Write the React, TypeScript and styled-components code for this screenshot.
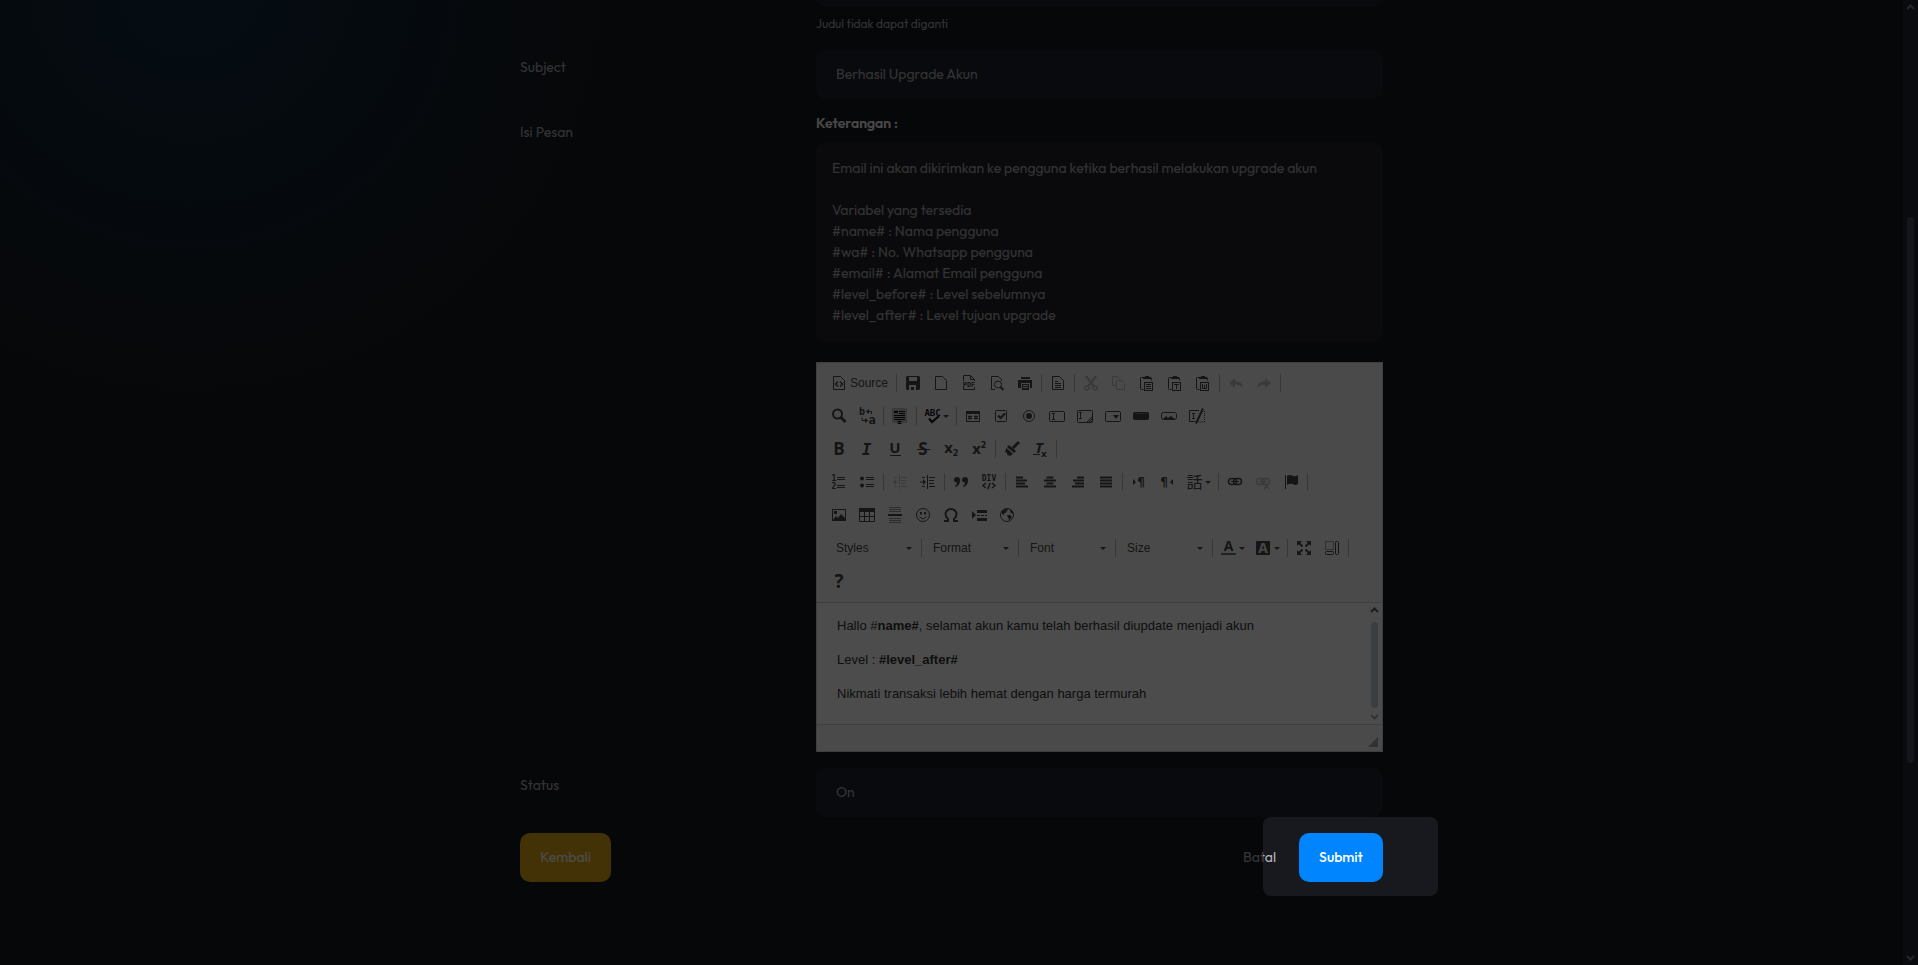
import React from "react";
import styled, { createGlobalStyle, css } from "styled-components";

const ui = `Outfit, Lato, "Liberation Sans", sans-serif`;
const arial = `"Liberation Sans", Arial, sans-serif`;

const Global = createGlobalStyle`
  *, *::before, *::after { box-sizing: border-box; }
  html, body { margin: 0; background: #060709; }
  body { font-family: ${ui}; font-size: 14px; line-height: 21px; color: #a9abb0; overflow: hidden; }
  button, input, select { font: inherit; color: inherit; margin: 0; }
`;

/* ---------- page frame ---------- */

const Frame = styled.div`
  display: grid;
  grid-template-columns: minmax(0, 1fr) 15px;
  height: 100vh;
`;

const Page = styled.main`
  overflow: hidden;
  background: radial-gradient(circle at 190px -20px, #112d43 0, #112534 150px, #141f2b 280px, #17191e 460px) #17191e;
`;

const Form = styled.form`
  max-width: 887px;
  margin: -42px auto 0;
  padding: 0 12px;
  display: flex;
  flex-direction: column;
  gap: 16px;
`;

const FormRow = styled.div`
  display: grid;
  grid-template-columns: 272px minmax(0, 1fr);
  column-gap: 24px;
  align-items: start;
`;

const Label = styled.label`
  padding-top: 7px;
`;

const control = css`
  display: block;
  width: 100%;
  height: 49px;
  padding: 0 20px 2px;
  border: 0;
  border-radius: 10px;
  background: #1f222e;
  outline: none;
`;

const TextInput = styled.input`${control}`;
const SelectInput = styled.select`${control} padding-bottom: 0; appearance: none;`;

const Help = styled.small`
  display: block;
  margin-top: 7px;
  height: 20px;
  font-size: 12px;
  line-height: 20px;
`;

const Caption = styled.strong`
  display: block;
  height: 27px;
  line-height: 17px;
  font-weight: 600;
  color: #f2f2f2;
`;

const Note = styled.div`
  padding: 16px;
  margin-bottom: 20px;
  border-radius: 10px;
  background: #242429;
  white-space: pre-line;
`;

const Actions = styled.div`
  display: flex;
  align-items: center;
`;

const Button = styled.button<{ $tone?: "warning" | "primary" }>`
  height: 49px;
  padding: 0 20px;
  border: 0;
  border-radius: 10px;
  font-weight: ${p => (p.$tone === "primary" ? 500 : 400)};
  color: ${p => (p.$tone ? "#fff" : "#b4b6bb")};
  background: ${p => (p.$tone === "warning" ? "#dea716" : p.$tone === "primary" ? "#0085ff" : "transparent")};
`;

const BackButton = styled(Button)`
  width: 91px;
  margin-right: auto;
`;

const TourTarget = styled.div`
  position: relative;
  z-index: 2;
  margin-left: 3px;
  ${Button} { width: 84px; }
`;

const Spotlight = styled.div`
  position: absolute;
  inset: -16px -55px -14px -36px;
  border-radius: 8px;
  box-shadow: 0 0 0 4000px rgba(0, 0, 0, 0.7);
  pointer-events: none;
`;

const Track = styled.div<{ $small?: boolean }>`
  display: flex;
  flex-direction: column;
  align-items: center;
  justify-content: space-between;
  width: 15px;
  padding: 4px 0;
  background: ${p => (p.$small ? "transparent" : "#0a0b0f")};
  color: ${p => (p.$small ? "#5c5c5c" : "#26272b")};
  svg:last-child { color: ${p => (p.$small ? "#a6a6a6" : "#26272b")}; }
`;

const Thumb = styled.div<{ $small?: boolean }>`
  width: 7px;
  flex: 0 0 ${p => (p.$small ? "86px" : "57%")};
  margin-top: ${p => (p.$small ? "3px" : "15px")};
  border-radius: 3px;
  background: ${p => (p.$small ? "#c6d0da" : "#15151c")};
`;

const Chevron = ({ down }: { down?: boolean }) => (
  <svg width="9" height="6" viewBox="0 0 9 6" aria-hidden="true">
    <path d={down ? "M1 1l3.500 3.500L8 1" : "M1 5l3.500-3.500L8 5"} fill="none" stroke="currentColor" strokeWidth="2" />
  </svg>
);

/* ---------- editor ---------- */

const Editor = styled.div`
  border: 1px solid #d1d1d1;
  background: #fff;
  color: #333;
  font-family: ${arial};
`;

const Toolbar = styled.div`
  padding: 6px 8px 2px;
  border-bottom: 1px solid #d1d1d1;
  background: #f8f8f8;
  color: #484848;
  font-size: 12px;
`;

const ToolRow = styled.div`
  display: flex;
  height: 28px;
  margin-bottom: 5px;
`;

const Divider = styled.span<{ $tight?: boolean }>`
  width: 1px;
  height: 18px;
  margin: ${p => (p.$tight ? "5px 0" : "5px 2px")};
  background: #bcbcbc;
`;

const LastDivider = styled(Divider)`
  margin: 5px 2px 5px 0;
`;

const ToolButton = styled.button<{ $labelled?: boolean }>`
  display: flex;
  align-items: center;
  gap: 3px;
  width: ${p => (p.$labelled ? "69px" : "auto")};
  height: 28px;
  padding: 0 6px;
  border: 0;
  background: none;
  line-height: 16px;
  &:disabled { color: inherit; opacity: 0.3; }
`;

const Glyph = styled.svg`
  display: block;
  flex: none;
  overflow: visible;
  text { font-family: "Open Sans", ${arial}; font-weight: 700; fill: currentColor; text-anchor: middle; }
  text.mono { font-family: "DejaVu Sans Mono", monospace; }
  text.wide { font-family: "DejaVu Sans", sans-serif; }
  text.cjk { font-family: "Noto Sans CJK JP", sans-serif; font-weight: 400; }
`;

const Caret = styled.span`
  margin-top: 1px;
  border: 3px solid transparent;
  border-top-color: #484848;
  border-bottom-width: 0;
`;

const Arrowed = styled(ToolButton)`
  width: 35px;
  gap: 2px;
  padding-right: 5px;
`;

const Combo = styled.label`
  display: flex;
  align-items: center;
  width: 96px;
  padding: 0 9px 0 11px;
  select {
    flex: 1;
    min-width: 0;
    padding: 0;
    border: 0;
    background: none;
    appearance: none;
    outline: none;
  }
`;

const Contents = styled.div`
  display: flex;
  height: 121px;
`;

const Editable = styled.div`
  flex: 1;
  padding: 0 20px;
  overflow: hidden;
  outline: none;
  font-size: 13px;
  p { margin: 13px 0; }
  p:first-child { margin-top: 12px; }
`;

const Footer = styled.div`
  display: flex;
  justify-content: flex-end;
  align-items: flex-end;
  height: 27px;
  padding: 4px;
  border-top: 1px solid #d1d1d1;
  background: #f8f8f8;
  svg { display: block; }
`;

const S = (d: string, w = 1) => <path d={d} fill="none" stroke="currentColor" strokeWidth={w} />;
const F = (d: string) => <path d={d} fill="currentColor" fillRule="evenodd" />;
const doc = "M2.500 1.500h7l4 4v9h-11z";
const clip = (
  <>
    {S("M4.500 2.500h-2q-1 0-1 1v10q0 1 1 1h2M10.500 2.500h1q1 0 1 1v2")}
    {F("M4 4V2h2V1h4v1h2v2zM5 7h9v9H5zM6 8v7h7V8z")}
  </>
);
const chain = (
  <>
    <rect x="1.500" y="4.500" width="8" height="6" rx="3" fill="none" stroke="currentColor" strokeWidth="1.500" />
    <rect x="6.500" y="4.500" width="8" height="6" rx="3" fill="none" stroke="currentColor" strokeWidth="1.500" />
    {S("M4 7.500h8")}
  </>
);

const icons: Record<string, React.ReactNode> = {
  source: <>{S(doc)}{S("M7 6.500L4.500 9 7 11.500M9 6.500l2.500 2.500L9 11.500", 1.5)}</>,
  save: F("M2 1h12l1 1v12l-1 1H2l-1-1V2zM4 2v4h8V2zM4 10v5h2v-3h3v3h2v-5z"),
  newpage: S(doc),
  pdf: <>{S("M2.500 6V.500h7l4 4V6M9.500 1v3.500H13M2.500 12v2.500h11V12")}<text className="mono" x="8" y="11.500" fontSize="7">PDF</text></>,
  preview: <>{S("M6 14.500H2.500v-13h7l3 3V6")}<circle cx="9" cy="9.500" r="3.500" fill="none" stroke="currentColor" />{S("M11.500 12l3 3", 2)}</>,
  print: F("M4 2h9v2H4zM1 5h14v8h-2V8H4v5H1zM5 9h7v6H5zM6 10v1h5v-1zM6 12v1h5v-1z"),
  templates: <>{S(doc)}{S("M5 6.500h3M5 8.500h6M5 10.500h6M5 12.500h6")}</>,
  cut: <>{S("M3 1l7.500 10M13 1L5.500 11", 2.5)}<circle cx="4" cy="13" r="2" fill="none" stroke="currentColor" strokeWidth="1.500" /><circle cx="12" cy="13" r="2" fill="none" stroke="currentColor" strokeWidth="1.500" /></>,
  copy: <>{S("M5 10.500H1.500v-9h5l3 3")}{S("M5.500 5.500h5l3 3v6h-8z")}</>,
  paste: <>{clip}{S("M7 9.500h5M7 11.500h5M7 13.500h5")}</>,
  pastetext: <>{clip}{S("M7 9.500h5M9.500 9.500V14")}</>,
  pasteword: <>{clip}{S("M7.500 9v4.500h4V9M9.500 10v4")}</>,
  undo: F("M1 8l6-5v3q7 0 8 7-3-3.500-8-3.500V13z"),
  redo: F("M15 8L9 3v3q-7 0-8 7 3-3.500 8-3.500V13z"),
  find: <><circle cx="6.500" cy="6" r="4.500" fill="none" stroke="currentColor" strokeWidth="2" />{S("M9.500 9l5 5", 3)}</>,
  replace: <><text className="mono" x="3" y="7" fontSize="10">b</text><text className="mono" x="13" y="15.500" fontSize="12">a</text>{S("M8 3.500h4.500V6M3 9.500v3h3.500")}{F("M7 3.500l3-2.500v5zM9 12.500L6 10v5z")}</>,
  selectall: <><rect x="0" y="0" width="15" height="15" fill="#c4c4c4" /><g color="#111">{S("M2 3.500h4M2 4.500h4M7 3.500h6M7 5.500h6M2 7.500h11M2 9.500h11M2 11.500h11M5.500 13.500h4M7.500 13v3M5.500 15.500h4")}</g></>,
  spell: <g color="#111"><text className="mono" x="7.500" y="8" fontSize="9">ABC</text>{S("M4 10.500l3 3.500 7-6", 2)}</g>,
  form: <>{F("M1 3h14v11H1zM2 6v7h12V6z")}{S("M3 8.500h4M3 10.500h4M9 8.500h4M9 10.500h4", 1.5)}</>,
  checkbox: <><rect x="2.500" y="2.500" width="11" height="11" rx="1" fill="none" stroke="currentColor" />{S("M5 7.500l2.500 2.500L12 5.500", 2)}</>,
  radio: <><circle cx="8" cy="8" r="5.500" fill="none" stroke="currentColor" /><circle cx="8" cy="8" r="3" fill="currentColor" /></>,
  textfield: <><rect x=".500" y="3.500" width="15" height="10" rx="1" fill="none" stroke="currentColor" />{S("M3 5.500h3M4.500 5.500v6M3 11.500h3")}</>,
  textarea: <><rect x=".500" y="2.500" width="15" height="12" rx="1" fill="none" stroke="currentColor" />{S("M2 4.500h3M3.500 4.500v6M2 10.500h3M9.500 14.500l6-6M11.500 14.500l4-4M13.500 14.500l2-2")}</>,
  select: <><rect x=".500" y="3.500" width="15" height="10" rx="1" fill="none" stroke="currentColor" />{F("M8 7h6l-3 4z")}</>,
  button: <><rect x="0" y="4" width="16" height="8" rx="2" fill="currentColor" /><rect x="2" y="5" width="12" height="1" fill="#777" /></>,
  imagebutton: <><rect x=".500" y="4.500" width="15" height="7" rx="2" fill="none" stroke="currentColor" />{F("M2 11l3-3 2 2 3-2 4 3z")}</>,
  hidden: <>{S("M10 2.500H.500v11h6M3 5.500h3M4.500 5.500v5M3 10.500h3")}{S("M14 .500l-7 15", 2)}<path d="M15.500 3v11h-7" fill="none" stroke="currentColor" strokeDasharray="1 1" /></>,
  bold: <text x="8" y="14" fontSize="17">B</text>,
  italic: <text className="mono" x="7.500" y="14" fontSize="16" fontStyle="italic">I</text>,
  underline: <><text x="8" y="12" fontSize="15">U</text>{S("M3 14.500h11")}</>,
  strike: <><text x="8" y="14" fontSize="17">S</text>{S("M2 8.500h13")}</>,
  sub: <><text className="wide" x="5.500" y="12" fontSize="14">x</text><text className="wide" x="12.500" y="15" fontSize="8">2</text></>,
  sup: <><text className="wide" x="5.500" y="13" fontSize="14">x</text><text className="wide" x="12.500" y="7" fontSize="8">2</text></>,
  brush: <>{S("M15 1L9 7", 3)}{F("M5 4l7 6-2 2-7-6zM2.500 7l6.500 6-3 2-2.500-1-.500-2-2-1z")}</>,
  removeformat: <><text x="7" y="12" fontSize="15" fontStyle="italic">T</text><text className="wide" x="12" y="15.500" fontSize="9">x</text>{S("M1 13.500h7")}</>,
  numbered: <><text className="mono" x="3" y="7" fontSize="8">1</text><text className="mono" x="3" y="15" fontSize="8">2</text>{S("M6 3.500h8M6 5.500h8M6 11.500h8M6 13.500h8")}</>,
  bulleted: <><circle cx="3" cy="4.500" r="2" fill="currentColor" /><circle cx="3" cy="11.500" r="2" fill="currentColor" />{S("M7 3.500h8M7 5.500h8M7 10.500h8M7 12.500h8")}</>,
  outdent: <>{S("M7.500 1v14M9 3.500h6M9 6.500h5M9 9.500h5M9 12.500h6M2 3.500h3M2 12.500h3M3 8h3")}{F("M1 8l3-3v6z")}</>,
  indent: <>{S("M7.500 1v14M9 3.500h6M9 6.500h5M9 9.500h5M9 12.500h6M2 3.500h3M2 12.500h3M0 8h3")}{F("M6 8L3 5v6z")}</>,
  quote: F("M1 6a3 3 0 1 1 6 0q0 6-5 7v-1q2-1.500 2-3.500-3 0-3-2.500zM9 6a3 3 0 1 1 6 0q0 6-5 7v-1q2-1.500 2-3.500-3 0-3-2.500z"),
  div: <><text className="mono" x="8" y="7" fontSize="8">DIV</text>{S("M5 9l-3 2.500L5 14M11 9l3 2.500-3 2.500M9 9l-2 6", 1.5)}</>,
  left: S("M2 3.500h7M2 6.500h11M2 9.500h9M2 12.500h12", 2),
  center: S("M4.500 3.500h7M2 6.500h12M4.500 9.500h7M2 12.500h12", 2),
  right: S("M7 3.500h7M3 6.500h11M5 9.500h9M2 12.500h12", 2),
  justify: S("M2 3.500h12M2 6.500h12M2 9.500h12M2 12.500h12", 2),
  ltr: <>{F("M2 5l3 3-3 3z")}<text className="wide" x="10" y="12" fontSize="12">¶</text></>,
  rtl: <><text className="wide" x="5" y="12" fontSize="12">¶</text>{F("M14 5l-3 3 3 3z")}</>,
  language: <text className="cjk" x="7.500" y="14" fontSize="16">話</text>,
  link: chain,
  unlink: <>{chain}{S("M9 9l5 6M14 9l-5 6", 1.5)}</>,
  anchor: F("M2 1h1v14H2zM4 2q3-2 6 0 2 1 5-1v9q-3 2-5 0-3-1-6 1z"),
  image: F("M1 2h14v12H1zM2 3v10l3-4 2 2 3-4 4 4V3zM3 4h3v3H3z"),
  table: <>{F("M0 1h16v4H0z")}{S("M.500 4v10.500h15V4M5.500 5v9M10.500 5v9M1 9.500h14")}</>,
  rule: <><path d="M2 .500h12M2 2.500h12M2 4.500h12M2 11.500h12M2 13.500h12M2 15.500h12" stroke="#969696" fill="none" />{S("M1 8h14", 2)}</>,
  smiley: <><circle cx="8" cy="8" r="6.500" fill="none" stroke="currentColor" />{S("M4.500 9.500q3.500 4.500 7 0")}{F("M5 5h2v2.500H5zM9 5h2v2.500H9z")}</>,
  omega: S("M1 14h4v-2Q2.500 10 2.500 7A5.500 5 0 0 1 13.500 7q0 3-2.500 5v2h4", 2),
  pagebreak: <>{F("M1 4l4 4-4 4zM6 3h10v3H6zM6 11h10v3H6z")}<path d="M6 8.500h10" stroke="currentColor" strokeDasharray="3 1" fill="none" /></>,
  iframe: <><circle cx="8" cy="8" r="6.500" fill="none" stroke="currentColor" />{F("M3 4q2-2 5-2l1 1-2 2 0 1-2 0 0 2-2-1zM8 8h3l2 1.500-2.500 4-1.500-3zM11 2l3 3-.500 2-1.500-1-1-2z")}</>,
  textcolor: <><text x="7.500" y="11" fontSize="14">A</text><rect x="0" y="13" width="15" height="2" fill="#777" /></>,
  bgcolor: <><rect x="0" y="1" width="14" height="14" rx="1" fill="currentColor" /><text x="7" y="13" fontSize="14" style={{ fill: "#eee" }}>A</text></>,
  maximize: <>{F("M1 1h5L1 6zM15 1v5l-5-5zM1 15v-5l5 5zM15 15h-5l5-5z")}{S("M3 3l3.500 3.500M13 3L9.500 6.500M3 13l3.500-3.500M13 13L9.500 9.500", 2)}</>,
  blocks: <><path d="M1.500 1.500h8v8h-8z" fill="none" stroke="currentColor" strokeDasharray="1 1" /><rect x="1.500" y="11.500" width="8" height="3" rx="1" fill="none" stroke="currentColor" /><rect x="11.500" y="1.500" width="3" height="13" rx="1" fill="none" stroke="currentColor" /></>,
  about: <text x="8" y="15" fontSize="19">?</text>,
};

const off = new Set(["cut", "copy", "undo", "redo", "outdent", "unlink"]);
const arrowed = new Set(["spell", "language", "textcolor", "bgcolor"]);

const Tool = ({ name }: { name: string }) => {
  const glyph = <Glyph width="16" height="16" viewBox="0 0 16 16" aria-hidden="true">{icons[name]}</Glyph>;
  if (arrowed.has(name)) return <Arrowed type="button" aria-label={name}>{glyph}<Caret /></Arrowed>;
  if (name === "source") return <ToolButton type="button" $labelled>{glyph}Source</ToolButton>;
  return <ToolButton type="button" aria-label={name} disabled={off.has(name)}>{glyph}</ToolButton>;
};

/* "|" marks the divider between two groups of buttons */
const Tools = ({ list }: { list: string }) => (
  <>{list.split(" ").map((n, i) => (n === "|" ? <Divider key={i} /> : <Tool key={i} name={n} />))}</>
);

const combos = ["Styles", "Format", "Font", "Size"];

const MailEditor = () => (
  <Editor>
    <Toolbar role="toolbar" aria-label="Editor">
      <ToolRow><Tools list="source | save newpage pdf preview print | templates | cut copy paste pastetext pasteword | undo redo |" /></ToolRow>
      <ToolRow><Tools list="find replace | selectall | spell | form checkbox radio textfield textarea select button imagebutton hidden" /></ToolRow>
      <ToolRow><Tools list="bold italic underline strike sub sup | brush removeformat |" /></ToolRow>
      <ToolRow><Tools list="numbered bulleted | outdent indent | quote div | left center right justify | ltr rtl language | link unlink anchor |" /></ToolRow>
      <ToolRow><Tools list="image table rule smiley omega pagebreak iframe" /></ToolRow>
      <ToolRow>
        {combos.map((c, i) => (
          <React.Fragment key={c}>
            <Combo>
              <select aria-label={c}><option>{c}</option></select>
              <Caret />
            </Combo>
            {i < combos.length - 1 ? <Divider $tight /> : <LastDivider />}
          </React.Fragment>
        ))}
        <Tools list="textcolor bgcolor | maximize blocks |" />
      </ToolRow>
      <ToolRow><Tools list="about" /></ToolRow>
    </Toolbar>
    <Contents>
      <Editable contentEditable suppressContentEditableWarning role="textbox" aria-label="Isi Pesan">
        <p>Hallo #<b>name#</b>, selamat akun kamu telah berhasil diupdate menjadi akun</p>
        <p>Level : <b>#level_after#</b></p>
        <p>Nikmati transaksi lebih hemat dengan harga termurah</p>
      </Editable>
      <Track $small><Chevron /><Thumb $small /><Chevron down /></Track>
    </Contents>
    <Footer><svg width="10" height="10" viewBox="0 0 10 10" aria-hidden="true"><path d="M10 0v10H0z" fill="#a8a8a8" /></svg></Footer>
  </Editor>
);

const note = `Email ini akan dikirimkan ke pengguna ketika berhasil melakukan upgrade akun

Variabel yang tersedia
#name# : Nama pengguna
#wa# : No. Whatsapp pengguna
#email# : Alamat Email pengguna
#level_before# : Level sebelumnya
#level_after# : Level tujuan upgrade`;

export default function App() {
  return (
    <>
      <Global />
      <Frame>
        <Page>
          <Form onSubmit={e => e.preventDefault()}>
            <FormRow>
              <Label />
              <div>
                <TextInput aria-label="Judul" disabled />
                <Help>Judul tidak dapat diganti</Help>
              </div>
            </FormRow>
            <FormRow>
              <Label htmlFor="subject">Subject</Label>
              <TextInput id="subject" defaultValue="Berhasil Upgrade Akun" />
            </FormRow>
            <FormRow>
              <Label as="span">Isi Pesan</Label>
              <div>
                <Caption>Keterangan :</Caption>
                <Note>{note}</Note>
                <MailEditor />
              </div>
            </FormRow>
            <FormRow>
              <Label htmlFor="status">Status</Label>
              <SelectInput id="status"><option>On</option></SelectInput>
            </FormRow>
            <Actions>
              <BackButton type="button" $tone="warning">Kembali</BackButton>
              <Button type="reset">Batal</Button>
              <TourTarget>
                <Button type="submit" $tone="primary">Submit</Button>
                <Spotlight />
              </TourTarget>
            </Actions>
          </Form>
        </Page>
        <Track aria-hidden="true"><Chevron /><Thumb /><Chevron down /></Track>
      </Frame>
    </>
  );
}
